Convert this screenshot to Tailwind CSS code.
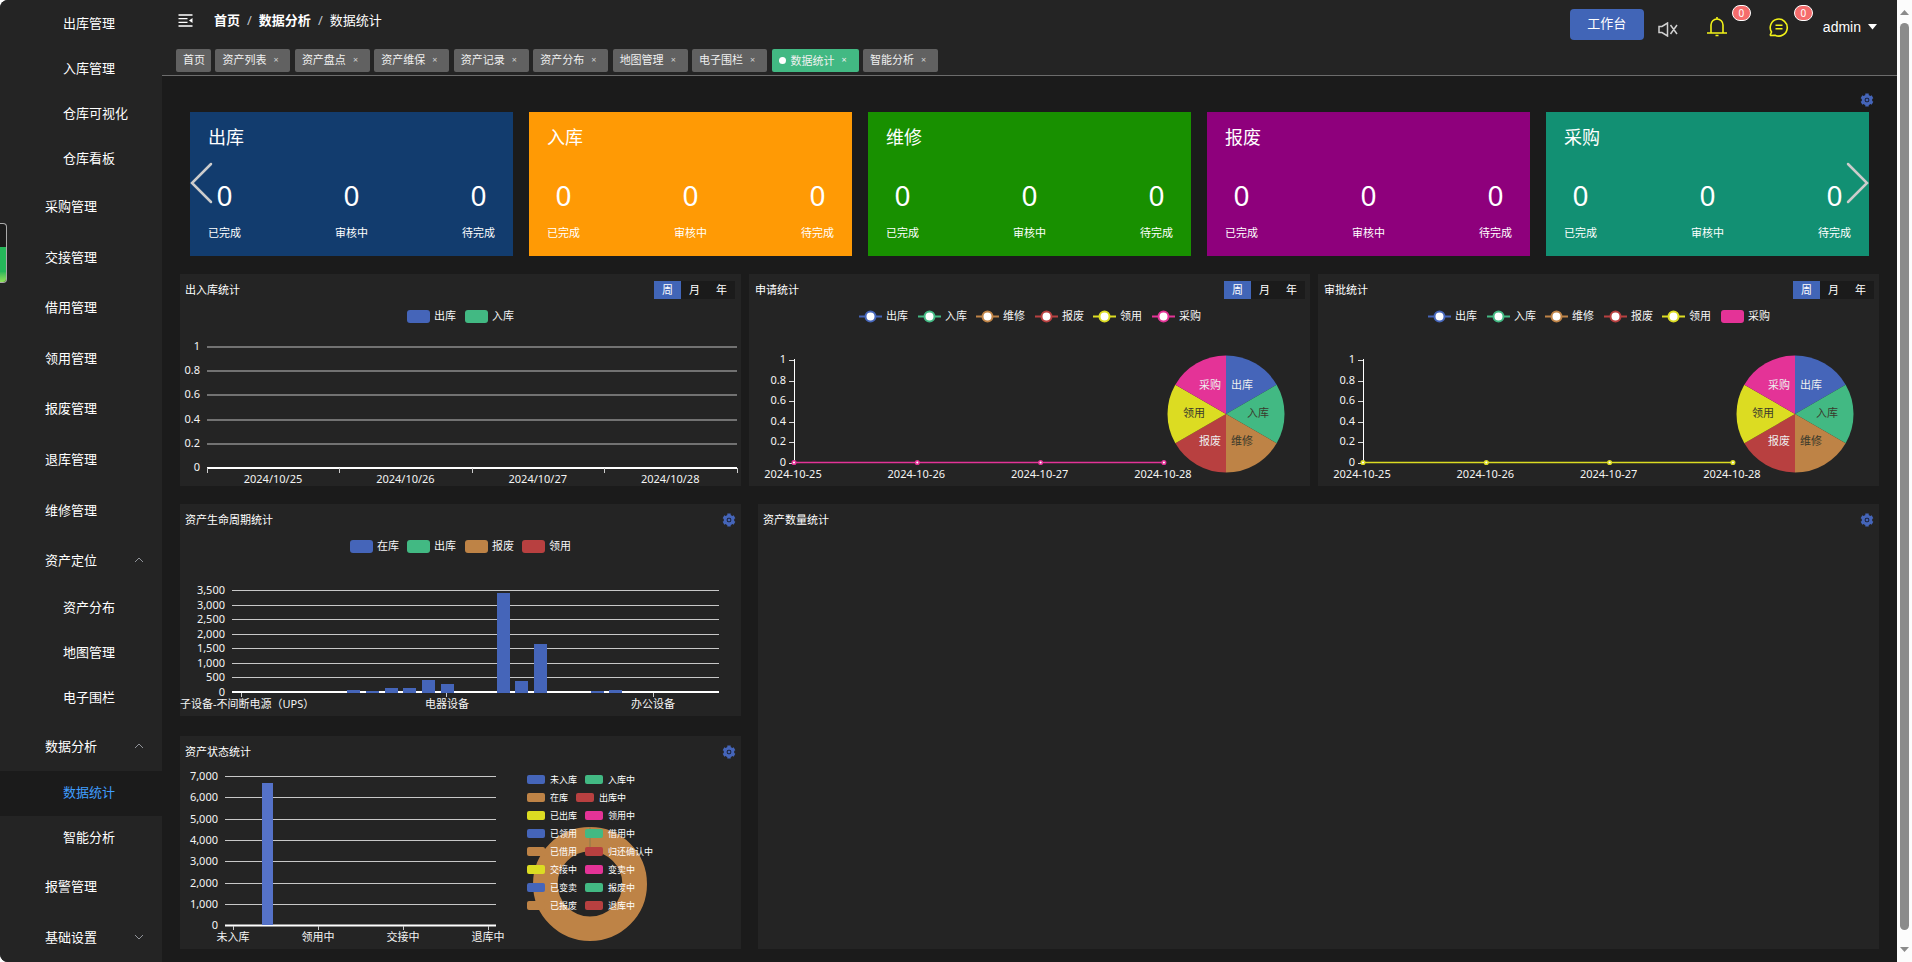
<!DOCTYPE html>
<html lang="zh-CN">
<head>
<meta charset="utf-8">
<title>数据统计</title>
<script src="https://cdn.jsdelivr.net/npm/@tailwindcss/browser@4"></script>
</head>
<body class="bg-white font-['Noto_Sans','Noto_Sans_CJK_SC',sans-serif] text-white">
<svg class="hidden">
  <symbol id="gear" viewBox="0 0 14 14"><g fill="none" stroke="#4565b9"><circle cx="7" cy="7" r="3.8" stroke-width="3"/><path d="M7 .6v12.800M1.500 3.800l11 6.400M12.500 3.800l-11 6.400" stroke-width="3.400" stroke-dasharray="2.400 8 2.400"/></g><circle cx="7" cy="7" r="2.300" fill="#1c2748"/><circle cx="7" cy="7" r="1.300" fill="#4565b9"/></symbol>
</svg>
<div class="flex min-h-screen overflow-hidden rounded-l-lg bg-[#1b1b1b]">

  <nav class="flex w-[162px] shrink-0 flex-col bg-[#242424] pt-px text-[13px] leading-5">
    <a href="#" class="flex h-[45px] items-center pb-0.5 pl-[63px]">出库管理</a>
    <a href="#" class="flex h-[45px] items-center pb-0.5 pl-[63px]">入库管理</a>
    <a href="#" class="flex h-[45px] items-center pb-0.5 pl-[63px]">仓库可视化</a>
    <a href="#" class="flex h-[45px] items-center pb-0.5 pl-[63px]">仓库看板</a>
    <a href="#" class="flex min-h-[50px] flex-1 items-center pl-[45px]">采购管理</a>
    <a href="#" class="flex min-h-[50px] flex-1 items-center pl-[45px]">交接管理</a>
    <a href="#" class="flex min-h-[50px] flex-1 items-center pl-[45px]">借用管理</a>
    <a href="#" class="flex min-h-[50px] flex-1 items-center pl-[45px]">领用管理</a>
    <a href="#" class="flex min-h-[50px] flex-1 items-center pl-[45px]">报废管理</a>
    <a href="#" class="flex min-h-[50px] flex-1 items-center pl-[45px]">退库管理</a>
    <a href="#" class="flex min-h-[50px] flex-1 items-center pl-[45px]">维修管理</a>
    <button class="flex min-h-[50px] flex-1 items-center justify-between pr-[18px] pl-[45px]">资产定位<svg class="h-[6px] w-[10px]" viewBox="0 0 10 6" fill="none" stroke="#909399"><path d="M1 5l4-4 4 4"/></svg></button>
    <a href="#" class="flex h-[45px] items-center pb-0.5 pl-[63px]">资产分布</a>
    <a href="#" class="flex h-[45px] items-center pb-0.5 pl-[63px]">地图管理</a>
    <a href="#" class="flex h-[45px] items-center pb-0.5 pl-[63px]">电子围栏</a>
    <button class="flex min-h-[50px] flex-1 items-center justify-between pr-[18px] pl-[45px]">数据分析<svg class="h-[6px] w-[10px]" viewBox="0 0 10 6" fill="none" stroke="#909399"><path d="M1 5l4-4 4 4"/></svg></button>
    <a href="#" class="flex h-[45px] items-center bg-[#1b1b1b] pb-0.5 pl-[63px] text-[#409eff]">数据统计</a>
    <a href="#" class="flex h-[45px] items-center pb-0.5 pl-[63px]">智能分析</a>
    <a href="#" class="flex min-h-[50px] flex-1 items-center pl-[45px]">报警管理</a>
    <button class="flex min-h-[50px] flex-1 items-center justify-between pr-[18px] pl-[45px]">基础设置<svg class="h-[6px] w-[10px]" viewBox="0 0 10 6" fill="none" stroke="#909399"><path d="M1 1l4 4 4-4"/></svg></button>
  </nav>

  <div class="flex min-w-0 flex-1 flex-col">
    <header class="flex h-[76px] justify-between border-b border-[#6c6c6c] bg-[#242424] pl-[14px]">
      <div class="flex flex-col">
        <div class="flex h-[49px] items-start gap-[21px] pt-[10px] pl-0.5">
          <button aria-label="收起菜单" class="pt-1"><svg class="h-[13px] w-[15px]" viewBox="0 0 15 13" stroke="#fff" stroke-width="1.3" fill="none"><path d="M.5 1h14M.5 4.700h9M.5 8.300h9M.5 12h14"/><path d="M14.500 4v5l-3.500-2.500z" fill="#fff" stroke="none"/></svg></button>
          <ol class="flex items-center gap-[7px] text-[13px] leading-5">
            <li class="font-bold"><a href="#">首页</a></li><li class="text-[#c0c4cc]">/</li>
            <li class="font-bold"><a href="#">数据分析</a></li><li class="text-[#c0c4cc]">/</li>
            <li>数据统计</li>
          </ol>
        </div>
        <div class="flex w-[762px] justify-between text-[11px] leading-[21px] text-[#f0f0f0]">
          <a href="#" class="h-[23px] w-[35px] rounded-xs bg-[#616161] pl-[7px]">首页</a>
          <a href="#" class="flex h-[23px] w-[75px] gap-[7px] rounded-xs bg-[#616161] pl-[7px]">资产列表<span class="text-[9px] text-[#cfcfcf]">×</span></a>
          <a href="#" class="flex h-[23px] w-[75px] gap-[7px] rounded-xs bg-[#616161] pl-[7px]">资产盘点<span class="text-[9px] text-[#cfcfcf]">×</span></a>
          <a href="#" class="flex h-[23px] w-[75px] gap-[7px] rounded-xs bg-[#616161] pl-[7px]">资产维保<span class="text-[9px] text-[#cfcfcf]">×</span></a>
          <a href="#" class="flex h-[23px] w-[75px] gap-[7px] rounded-xs bg-[#616161] pl-[7px]">资产记录<span class="text-[9px] text-[#cfcfcf]">×</span></a>
          <a href="#" class="flex h-[23px] w-[75px] gap-[7px] rounded-xs bg-[#616161] pl-[7px]">资产分布<span class="text-[9px] text-[#cfcfcf]">×</span></a>
          <a href="#" class="flex h-[23px] w-[75px] gap-[7px] rounded-xs bg-[#616161] pl-[7px]">地图管理<span class="text-[9px] text-[#cfcfcf]">×</span></a>
          <a href="#" class="flex h-[23px] w-[75px] gap-[7px] rounded-xs bg-[#616161] pl-[7px]">电子围栏<span class="text-[9px] text-[#cfcfcf]">×</span></a>
          <a href="#" class="flex h-[23px] w-[87px] gap-[7px] rounded-xs bg-[#42b983] pl-[7px]"><span class="flex items-center gap-[5px]"><i class="h-[7px] w-[7px] rounded-full bg-white"></i>数据统计</span><span class="text-[9px]">×</span></a>
          <a href="#" class="flex h-[23px] w-[75px] gap-[7px] rounded-xs bg-[#616161] pl-[7px]">智能分析<span class="text-[9px] text-[#cfcfcf]">×</span></a>
        </div>
      </div>
      <div class="flex items-start pr-5">
        <button class="mt-[9px] h-[31px] w-[74px] rounded-sm bg-[#4165b7] pb-0.5 text-[13px]">工作台</button>
        <button aria-label="静音" class="mt-[22px] ml-[14px]"><svg class="h-[15px] w-[20px]" viewBox="0 0 20 15" fill="none" stroke="#d0d0d0" stroke-width="1.5"><path d="M1 4.500h3l5.500-3.500v13L4 10.500H1zM12.500 3l6.500 9M19 3l-6.500 9"/></svg></button>
        <button aria-label="通知" class="relative mt-[17px] ml-[29px]"><svg class="h-[20px] w-[20px]" viewBox="0 0 20 20" fill="none" stroke="#f2f218" stroke-width="1.6"><path d="M4 16V8a6 6 0 0 1 12 0v8M0 16h20M10 0v2M8.500 18.500h3"/></svg><span class="absolute -top-3 left-[25px] h-4 w-[19px] rounded-full border border-white bg-[#f56c6c] text-center text-[10px] leading-[14px]">0</span></button>
        <button aria-label="消息" class="relative mt-[17px] ml-[42px]"><svg class="h-[20px] w-[20px]" viewBox="0 0 20 20" fill="none" stroke="#f2f218" stroke-width="1.6"><path d="M1 18.500l1.500-3.500A8.500 8.500 0 1 1 6 18.200L1 18.500M6.500 8.300h7M6.500 11.700h7"/></svg><span class="absolute -top-3 left-[25px] h-4 w-[19px] rounded-full border border-white bg-[#f56c6c] text-center text-[10px] leading-[14px]">0</span></button>
        <button class="mt-[17px] ml-[34px] flex items-center gap-[7px] font-['Liberation_Sans'] text-sm">admin<svg class="h-[6px] w-[9px]" viewBox="0 0 9 6"><path d="M0 0h9L4.500 5.500z" fill="#fff"/></svg></button>
      </div>
    </header>

    <main class="flex flex-1 flex-col px-[18px] pb-[13px]">
      <div class="flex h-9 items-end justify-end pr-[5px] pb-[5px]"><button aria-label="卡片设置"><svg class="h-[14px] w-[14px]"><use href="#gear"/></svg></button></div>
      <section id="cards" class="relative mx-[10px] grid grid-cols-5 gap-4">
        <button aria-label="上一页" class="absolute top-[50px] left-0"><svg class="h-[42px] w-[24px]" viewBox="0 0 24 42" fill="none" stroke="#ccc" stroke-width="2.5" stroke-linecap="round"><path d="M21 2L2 21l19 19"/></svg></button>
        <button aria-label="下一页" class="absolute top-[50px] right-0"><svg class="h-[42px] w-[24px]" viewBox="0 0 24 42" fill="none" stroke="#ccc" stroke-width="2.5" stroke-linecap="round"><path d="M3 2l19 19L3 40"/></svg></button>
      </section>

      <div class="mt-[18px] grid grid-cols-3 gap-2">
        <section class="bg-[#242424]">
          <header class="flex h-8 items-center justify-between pr-[6px] pl-[5px] text-[11px]"><h2>出入库统计</h2><div class="flex bg-[#1b1b1b]"><button class="h-[18px] w-[27px] bg-[#4165b7]">周</button><button class="h-[18px] w-[27px]">月</button><button class="h-[18px] w-[27px]">年</button></div></header>
          <svg id="stock" class="block w-full" viewBox="0 0 561 180" font-size="11" fill="#f4f4f4"></svg>
        </section>
        <section class="bg-[#242424]">
          <header class="flex h-8 items-center justify-between pr-[5px] pl-[6px] text-[11px]"><h2>申请统计</h2><div class="flex bg-[#1b1b1b]"><button class="h-[18px] w-[27px] bg-[#4165b7]">周</button><button class="h-[18px] w-[27px]">月</button><button class="h-[18px] w-[27px]">年</button></div></header>
          <svg id="apply" class="block w-full" viewBox="0 0 561 180" font-size="11" fill="#f4f4f4"></svg>
        </section>
        <section class="bg-[#242424]">
          <header class="flex h-8 items-center justify-between pr-[5px] pl-[6px] text-[11px]"><h2>审批统计</h2><div class="flex bg-[#1b1b1b]"><button class="h-[18px] w-[27px] bg-[#4165b7]">周</button><button class="h-[18px] w-[27px]">月</button><button class="h-[18px] w-[27px]">年</button></div></header>
          <svg id="approve" class="block w-full" viewBox="0 0 561 180" font-size="11" fill="#f4f4f4"></svg>
        </section>
      </div>

      <div class="mt-[18px] grid grid-cols-[561fr_1121fr] gap-x-[17px] gap-y-5">
        <section class="bg-[#242424]">
          <header class="flex h-8 items-center justify-between pr-[5px] pl-[5px] text-[11px]"><h2>资产生命周期统计</h2><button aria-label="设置"><svg class="h-[14px] w-[14px]"><use href="#gear"/></svg></button></header>
          <svg id="life" class="block w-full" viewBox="0 0 561 180" font-size="11" fill="#f4f4f4"></svg>
        </section>
        <section class="row-span-2 bg-[#242424]">
          <header class="flex h-8 items-center justify-between pr-[5px] pl-[5px] text-[11px]"><h2>资产数量统计</h2><button aria-label="设置"><svg class="h-[14px] w-[14px]"><use href="#gear"/></svg></button></header>
        </section>
        <section class="bg-[#242424] pb-px">
          <header class="flex h-8 items-center justify-between pr-[5px] pl-[5px] text-[11px]"><h2>资产状态统计</h2><button aria-label="设置"><svg class="h-[14px] w-[14px]"><use href="#gear"/></svg></button></header>
          <svg id="state" class="block w-full" viewBox="0 0 561 180" font-size="11" fill="#f4f4f4"></svg>
        </section>
      </div>
    </main>
  </div>

  <div class="flex w-[15px] shrink-0 flex-col items-center bg-[#fcfcfc] py-[10px]" aria-hidden="true">
    <svg class="h-[5px] w-[9px]" viewBox="0 0 9 5"><path d="M0 5L4.500 0 9 5z" fill="#8b8b8b"/></svg>
    <div class="mt-2 mb-[17px] w-[9px] flex-1 rounded-full bg-[#8b8b8b]"></div>
    <svg class="h-[5px] w-[9px]" viewBox="0 0 9 5"><path d="M0 0l4.500 5L9 0z" fill="#8b8b8b"/></svg>
  </div>
</div>
<div class="absolute top-[223px] left-0 flex h-[60px] w-[7px] flex-col justify-end overflow-hidden rounded-r-sm border border-l-0 border-[#aaa] bg-[#1b1b1b]"><div class="h-[35px] bg-linear-to-b from-[#25b85a] from-70% to-[#8ee05a]"></div></div>

<script>
const C = ['#4565b9', '#42b983', '#be8346', '#b84040', '#dcdc22', '#e43397'];
const KINDS = ['出库', '入库', '维修', '报废', '领用', '采购'];
const text = (x, y, s, anchor = 'start', extra = '') => `<text x="${x}" y="${y}" text-anchor="${anchor}" ${extra}>${s}</text>`;
const line = (x1, y1, x2, y2, c = '#c8c8c8', w = 1) => `<path d="M${x1} ${y1}H${x2}V${y2}" fill="none" stroke="${c}" stroke-width="${w}"/>`;
const rect = (x, y, w, h, c, r = 0) => `<rect x="${x}" y="${y}" width="${w}" height="${h}" rx="${r}" fill="${c}"/>`;
const swatch = (x, c, s) => rect(x, 4, 23, 13, c, 3) + text(x + 27, 14, s);
const marker = (x, c, s) => line(x, 10.5, x + 23, 10.5, c, 2) + `<circle cx="${x + 11.5}" cy="10.5" r="5" fill="#fff" stroke="${c}" stroke-width="2"/>` + text(x + 27, 14, s);
const draw = (id, s) => document.getElementById(id).innerHTML = s;

document.getElementById('cards').insertAdjacentHTML('afterbegin',
  [['出库', '#123c6e'], ['入库', '#ff9a05'], ['维修', '#189000'], ['报废', '#8e007c'], ['采购', '#129073']].map(([name, color]) =>
  `<article class="h-[144px] px-[18px] pt-[12px]" style="background:${color}"><h2 class="text-lg leading-[26px]">${name}</h2>
   <dl class="mt-[27px] flex justify-between text-center">${['已完成', '审核中', '待完成'].map(s =>
   `<div class="flex flex-col-reverse gap-3"><dt class="text-[11px] leading-4">${s}</dt><dd class="text-[28px] leading-9">0</dd></div>`).join('')}</dl></article>`).join(''));

/* 出入库统计 */
{
  let s = swatch(227, C[0], '出库') + swatch(285, C[1], '入库');
  ['1', '0.8', '0.6', '0.4', '0.2', '0'].forEach((v, i) => {
    const y = 41 + Math.round(i * 24.2);
    s += (i < 5 ? line(27, y, 557, y, '#c0c0c0', 1.2) : line(27, y, 557, y, '#fff', 2)) + text(20, y + 3, v, 'end');
  });
  for (let i = 0; i < 5; i++) s += rect(27 + Math.round(i * 132.4), 162, 1, 5, '#ccc');
  [25, 26, 27, 28].forEach((d, i) => s += text(93 + i * 132.4, 177, '2024/10/' + d, 'middle'));
  draw('stock', s);
}

/* 申请统计 / 审批统计 */
function trend(id, color, lastIsSwatch) {
  let s = KINDS.map((k, i) => (lastIsSwatch && i === 5 ? swatch : marker)(110 + Math.round(i * 58.5), C[i], k)).join('');
  s += rect(45, 53, 1, 104, '#fff');
  ['1', '0.8', '0.6', '0.4', '0.2', '0'].forEach((v, i) => {
    const y = 54 + Math.round(i * 20.5);
    s += rect(40, y, 5, 1, '#ddd') + text(37, y + 3, v, 'end');
  });
  s += line(45, 156.5, 415, 156.5, color, 1.6);
  [25, 26, 27, 28].forEach((d, i) => {
    const x = 45 + i * 123.3;
    s += `<circle cx="${x}" cy="156.5" r="1.8" fill="#fff" stroke="${color}" stroke-width="1.5"/>` + text(x - 1, 172, '2024-10-' + d, 'middle');
  });
  const cx = 477, cy = 108, r = 58.5, p = a => `${cx + r * Math.sin(a)} ${cy - r * Math.cos(a)}`;
  KINDS.forEach((k, i) => s += `<path d="M${cx} ${cy}L${p(i * Math.PI / 3)}A${r} ${r} 0 0 1 ${p((i + 1) * Math.PI / 3)}z" fill="${C[i]}"/>`);
  [[493, 83], [509, 111], [493, 139], [461, 139], [445, 111], [461, 83]].forEach(([x, y], i) =>
    s += text(x, y, KINDS[i], 'middle', `fill="${[1, 2, 4].includes(i) ? '#3a3a2c' : '#eee'}"`));
  draw(id, s);
}
trend('apply', C[5], false);
trend('approve', C[4], true);

/* 资产生命周期统计 */
{
  let s = ['在库', '出库', '报废', '领用'].map((k, i) => swatch(170 + Math.round(i * 57.4), C[i], k)).join('');
  for (let i = 0; i < 8; i++) {
    const y = 54.5 + Math.round(i * 14.5);
    s += (i < 7 ? line(52, y, 539, y, '#c8c8c8', 1.2) : '') + text(45, y + 3, (3500 - i * 500).toLocaleString('en-US'), 'end');
  }
  s += line(52, 156, 539, 156, '#fff', 2);
  [61, 266, 473].forEach(x => s += rect(x, 157, 1, 4, '#ccc'));
  [[167, 2], [186, 1], [205, 4], [223, 4], [242, 12], [261, 8], [317, 99], [335, 11], [354, 48], [411, 1], [429, 2]]
    .forEach(([x, h]) => s += rect(x, 156 - h, 13, h + 1, C[0]));
  s += text(0, 172, '子设备-不间断电源（UPS）') + text(267, 172, '电器设备', 'middle') + text(473, 172, '办公设备', 'middle');
  draw('life', s);
}

/* 资产状态统计 */
{
  let s = '';
  for (let i = 0; i < 8; i++) {
    const y = 8.5 + Math.round(i * 21.3);
    s += line(45, y, 316, y, i < 7 ? '#c8c8c8' : '#fff', i < 7 ? 1.2 : 2) + text(38, y + 3, (7000 - i * 1000).toLocaleString('en-US'), 'end');
  }
  s += rect(82, 15, 11, 142, '#5572c8');
  ['未入库', '领用中', '交接中', '退库中'].forEach((k, i) => s += rect(53 + i * 85, 158, 1, 4, '#ccc') + text(53 + i * 85, 173, k, 'middle'));
  s += '<circle cx="410" cy="116" r="44.700" fill="none" stroke="#be8346" stroke-width="24.600"/><path d="M410 59v25" stroke="#8a7a4a"/>';
  [['未入库', '入库中'], ['在库', '出库中'], ['已出库', '领用中'], ['已领用', '借用中'], ['已借用', '归还确认中'], ['交接中', '变卖中'], ['已变卖', '报废中'], ['已报废', '退库中']].forEach(([a, b], i) => {
    const y = 7 + i * 18, x2 = 378 + a.length * 9;
    s += rect(347, y, 18, 9, C[2 * i % 6], 2) + text(370, y + 8, a, 'start', 'font-size="9" fill="#fff"') +
         rect(x2, y, 18, 9, C[(2 * i + 1) % 6], 2) + text(x2 + 23, y + 8, b, 'start', 'font-size="9" fill="#fff"');
  });
  draw('state', s);
}
</script>
</body>
</html>
